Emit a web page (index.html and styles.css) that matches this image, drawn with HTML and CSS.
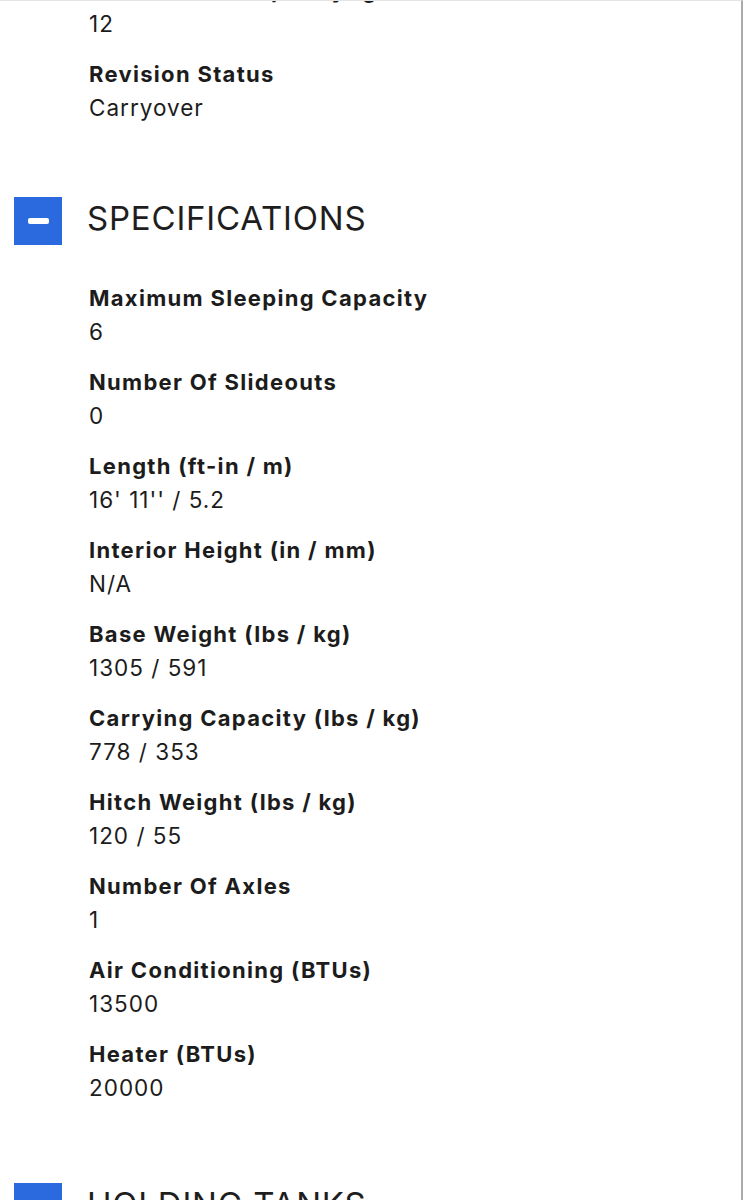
FILE: index.html
```html
<!DOCTYPE html>
<html lang="en">
<head>
<meta charset="utf-8">
<title>Specifications</title>
<link rel="stylesheet" href="styles.css">
</head>
<body>
<div class="page">
  <section class="section section-cut">
    <dl class="specs">
      <div class="spec">
        <dt>Fresh Water Capacity (gal / L)</dt>
        <dd>12</dd>
      </div>
      <div class="spec">
        <dt>Revision Status</dt>
        <dd>Carryover</dd>
      </div>
    </dl>
  </section>

  <section class="section section-specs">
    <h2 class="section-head">
      <span class="toggle"><span class="minus"></span></span>
      <span class="section-title">SPECIFICATIONS</span>
    </h2>
    <dl class="specs">
      <div class="spec"><dt>Maximum Sleeping Capacity</dt><dd>6</dd></div>
      <div class="spec"><dt>Number Of Slideouts</dt><dd>0</dd></div>
      <div class="spec"><dt>Length (ft-in / m)</dt><dd>16' 11'' / 5.2</dd></div>
      <div class="spec"><dt>Interior Height (in / mm)</dt><dd>N/A</dd></div>
      <div class="spec"><dt>Base Weight (lbs / kg)</dt><dd>1305 / 591</dd></div>
      <div class="spec"><dt>Carrying Capacity (lbs / kg)</dt><dd>778 / 353</dd></div>
      <div class="spec"><dt>Hitch Weight (lbs / kg)</dt><dd>120 / 55</dd></div>
      <div class="spec"><dt>Number Of Axles</dt><dd>1</dd></div>
      <div class="spec"><dt>Air Conditioning (BTUs)</dt><dd>13500</dd></div>
      <div class="spec"><dt>Heater (BTUs)</dt><dd>20000</dd></div>
    </dl>
  </section>

  <section class="section">
    <h2 class="section-head">
      <span class="toggle"><span class="minus"></span></span>
      <span class="section-title">HOLDING TANKS</span>
    </h2>
  </section>
</div>
</body>
</html>
```

FILE: styles.css
```css
html, body {
  margin: 0;
  padding: 0;
  background: #ffffff;
}

body {
  font-family: "Inter", "Liberation Sans", sans-serif;
  color: #1c1c1c;
  overflow: hidden;
}

.page {
  width: 741px;
  height: 1199px;
  border-top: 1px solid #e4e4e4;
  border-right: 2px solid #ababab;
  overflow: hidden;
}

.section {
  display: flex;
  flex-direction: column;
  margin-bottom: 73px;
}

.section-cut {
  margin-top: -27px;
}

.section-specs {
  margin-bottom: 79px;
}

.section-head {
  display: flex;
  align-items: center;
  gap: 25px;
  margin: 0 0 37px 14px;
  height: 48px;
  font-weight: 400;
}

.toggle {
  width: 48px;
  height: 48px;
  background: #2b69df;
  display: flex;
  align-items: center;
  justify-content: center;
  flex: none;
}

.minus {
  width: 21px;
  height: 6px;
  border-radius: 2px;
  background: #ffffff;
}

.section-title {
  font-size: 33px;
  line-height: 42px;
  padding-bottom: 6px;
  letter-spacing: 0.8px;
  color: #1e1e1e;
}

.specs {
  margin: 0;
  padding: 0 0 0 89px;
  display: flex;
  flex-direction: column;
  gap: 18px;
}

.spec dt {
  font-size: 22px;
  line-height: 33px;
  font-weight: 700;
  letter-spacing: 1.3px;
}

.spec dd {
  margin: 0;
  font-size: 22.5px;
  line-height: 33px;
  font-weight: 400;
  letter-spacing: 1px;
}
```
